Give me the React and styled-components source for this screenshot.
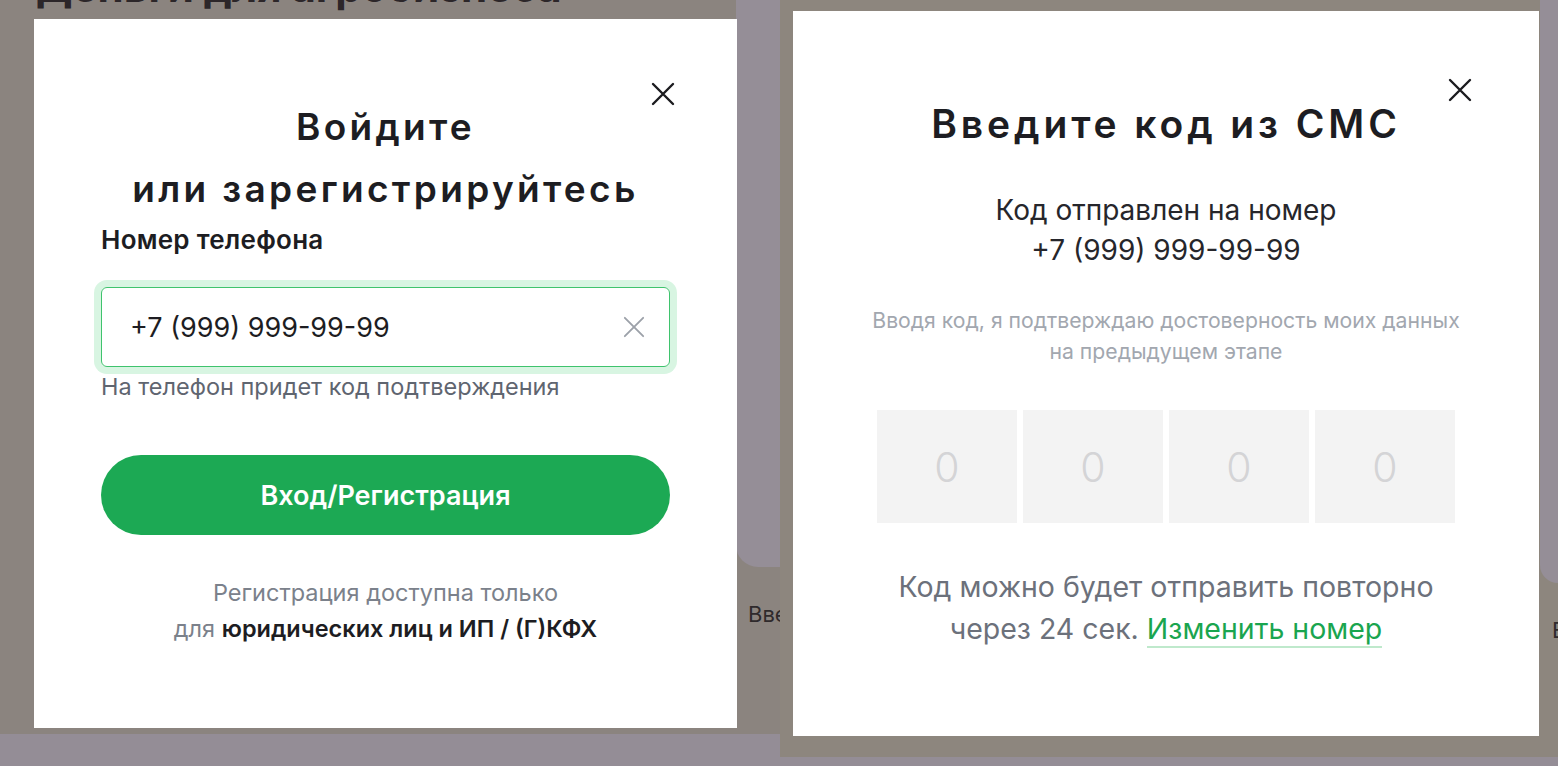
import styled, { createGlobalStyle } from 'styled-components'

const GlobalStyle = createGlobalStyle`
  * {
    box-sizing: border-box;
  }

  body {
    margin: 0;
    background: #948d96;
    font-family: Inter, 'Noto Sans', sans-serif;
    -webkit-font-smoothing: antialiased;
  }
`

function CrossIcon({ size = 24, color = '#1b1b1f', weight = 2.4 }) {
  return (
    <svg width={size} height={size} viewBox='0 0 24 24' fill='none'>
      <path
        d='M2 2 L22 22 M22 2 L2 22'
        stroke={color}
        strokeWidth={weight}
        strokeLinecap='round'
      />
    </svg>
  )
}

function App() {
  return (
    <>
      <GlobalStyle />
      <Canvas>
        <Screen $w={780} $h={734} $bg='#8b847f'>
          <BehindPage>
            <BehindMain>
              <BehindHeading>Деньги для агробизнеса</BehindHeading>
            </BehindMain>
            <BehindAside $w={44}>
              <BehindCard $h={567} />
              <BehindText>Введите</BehindText>
            </BehindAside>
          </BehindPage>

          <Modal $left={34} $top={19} $w={703} $h={709} $pt={77}>
            <CloseButton $top={63} $right={62} aria-label='Закрыть'>
              <CrossIcon size={24} />
            </CloseButton>
            <Title $size={37} $lh={62} $ls={0.09}>
              Войдите
              <br />
              или зарегистрируйтесь
            </Title>
            <Field>
              <Label>Номер телефона</Label>
              <InputBox>
                <PhoneInput defaultValue='+7 (999) 999-99-99' />
                <ClearButton aria-label='Очистить'>
                  <CrossIcon size={22} color='#9ca1a9' weight={2} />
                </ClearButton>
              </InputBox>
              <Hint>На телефон придет код подтверждения</Hint>
            </Field>
            <PrimaryButton>Вход/Регистрация</PrimaryButton>
            <Note>
              Регистрация доступна только
              <br />
              для <strong>юридических лиц и ИП / (Г)КФХ</strong>
            </Note>
          </Modal>
        </Screen>

        <Screen $w={778} $h={757} $bg='#8d867e'>
          <BehindPage>
            <BehindMain />
            <BehindAside $w={18}>
              <BehindCard $h={583} />
              <BehindText>Е</BehindText>
            </BehindAside>
          </BehindPage>

          <Modal $left={13} $top={11} $w={746} $h={725} $pt={83}>
            <CloseButton $top={67} $right={67} aria-label='Закрыть'>
              <CrossIcon size={24} />
            </CloseButton>
            <Title $size={39} $lh={60} $ls={0.1}>
              Введите код из СМС
            </Title>
            <SentText>
              Код отправлен на номер
              <br />
              +7 (999) 999-99-99
            </SentText>
            <Disclaimer>
              Вводя код, я подтверждаю достоверность моих данных
              <br />
              на предыдущем этапе
            </Disclaimer>
            <CodeRow>
              {[0, 1, 2, 3].map((i) => (
                <CodeCell key={i} placeholder='0' maxLength={1} />
              ))}
            </CodeRow>
            <ResendText>
              Код можно будет отправить повторно
              <br />
              через 24 сек. <ChangeLink href='#'>Изменить номер</ChangeLink>
            </ResendText>
          </Modal>
        </Screen>
      </Canvas>
    </>
  )
}

const Canvas = styled.div`
  display: flex;
  align-items: flex-start;
  width: 1558px;
  height: 766px;
  background: #948d96;
  overflow: hidden;
`

const Screen = styled.div`
  position: relative;
  flex: none;
  width: ${(p) => p.$w}px;
  height: ${(p) => p.$h}px;
  background: ${(p) => p.$bg};
  overflow: hidden;
`

const BehindPage = styled.div`
  display: flex;
  height: 100%;
`

const BehindMain = styled.div`
  flex: 1;
  padding-left: 36px;
`

const BehindHeading = styled.div`
  margin-top: -37px;
  font-size: 42px;
  line-height: 48px;
  font-weight: 700;
  color: #2c2629;
  white-space: nowrap;
`

const BehindAside = styled.div`
  flex: none;
  width: ${(p) => p.$w}px;
  display: flex;
  flex-direction: column;
`

const BehindCard = styled.div`
  height: ${(p) => p.$h}px;
  background: #958e97;
  border-bottom-left-radius: 22px;
`

const BehindText = styled.div`
  margin-top: 34px;
  padding-left: 12px;
  font-size: 22px;
  color: #2f2a2c;
  white-space: nowrap;
`

const Modal = styled.div`
  position: absolute;
  left: ${(p) => p.$left}px;
  top: ${(p) => p.$top}px;
  width: ${(p) => p.$w}px;
  height: ${(p) => p.$h}px;
  padding: ${(p) => p.$pt}px 67px 0;
  background: #fff;
  display: flex;
  flex-direction: column;
  align-items: center;
`

const CloseButton = styled.button`
  position: absolute;
  top: ${(p) => p.$top}px;
  right: ${(p) => p.$right}px;
  display: flex;
  padding: 0;
  border: none;
  background: none;
  cursor: pointer;
`

const Title = styled.h2`
  margin: 0;
  font-size: ${(p) => p.$size}px;
  line-height: ${(p) => p.$lh}px;
  font-weight: 600;
  letter-spacing: ${(p) => p.$ls}em;
  color: #1d1d22;
  text-align: center;
  white-space: nowrap;
`

const Field = styled.div`
  align-self: stretch;
  display: flex;
  flex-direction: column;
`

const Label = styled.div`
  margin-top: 5px;
  font-size: 26px;
  line-height: 30px;
  font-weight: 600;
  letter-spacing: 0.01em;
  color: #1d1d22;
`

const InputBox = styled.div`
  margin-top: 32px;
  height: 80px;
  display: flex;
  align-items: center;
  padding: 0 24px 0 28px;
  border: 1.5px solid #3fc36d;
  border-radius: 6px;
  box-shadow: 0 0 0 7px #d8f5e2;
`

const PhoneInput = styled.input`
  flex: 1;
  min-width: 0;
  border: none;
  outline: none;
  padding: 0;
  font-family: inherit;
  font-size: 27px;
  color: #1d1d22;
  background: transparent;
`

const ClearButton = styled.button`
  display: flex;
  padding: 0;
  border: none;
  background: none;
  cursor: pointer;
`

const Hint = styled.div`
  margin-top: 6px;
  font-size: 23.5px;
  line-height: 28px;
  color: #5f6570;
  white-space: nowrap;
`

const PrimaryButton = styled.button`
  align-self: stretch;
  margin-top: 54px;
  height: 80px;
  border: none;
  border-radius: 40px;
  background: #1ca954;
  color: #fff;
  font-family: inherit;
  font-size: 27px;
  font-weight: 600;
  cursor: pointer;
`

const Note = styled.p`
  margin: 40px 0 0;
  font-size: 23.5px;
  line-height: 36px;
  color: #7b818b;
  text-align: center;
  white-space: nowrap;

  strong {
    font-weight: 600;
    color: #1d1d22;
  }
`

const SentText = styled.p`
  margin: 36px 0 0;
  font-size: 28px;
  line-height: 40px;
  color: #26262b;
  text-align: center;
`

const Disclaimer = styled.p`
  margin: 35px 0 0;
  font-size: 21.2px;
  line-height: 31px;
  color: #a2a7af;
  text-align: center;
  white-space: nowrap;
`

const CodeRow = styled.div`
  margin-top: 43px;
  display: grid;
  grid-template-columns: repeat(4, 140px);
  gap: 6px;
`

const CodeCell = styled.input`
  width: 140px;
  height: 113px;
  border: none;
  outline: none;
  background: #f3f3f3;
  text-align: center;
  font-family: inherit;
  font-size: 41px;
  font-weight: 300;
  color: #1d1d22;

  &::placeholder {
    color: #d4d4d6;
  }
`

const ResendText = styled.p`
  margin: 43px 0 0;
  font-size: 28.5px;
  line-height: 42px;
  color: #6c717b;
  text-align: center;
  white-space: nowrap;
`

const ChangeLink = styled.a`
  color: #1aa54f;
  text-decoration: none;
  border-bottom: 2px solid #bfe9cc;
`

export default App
